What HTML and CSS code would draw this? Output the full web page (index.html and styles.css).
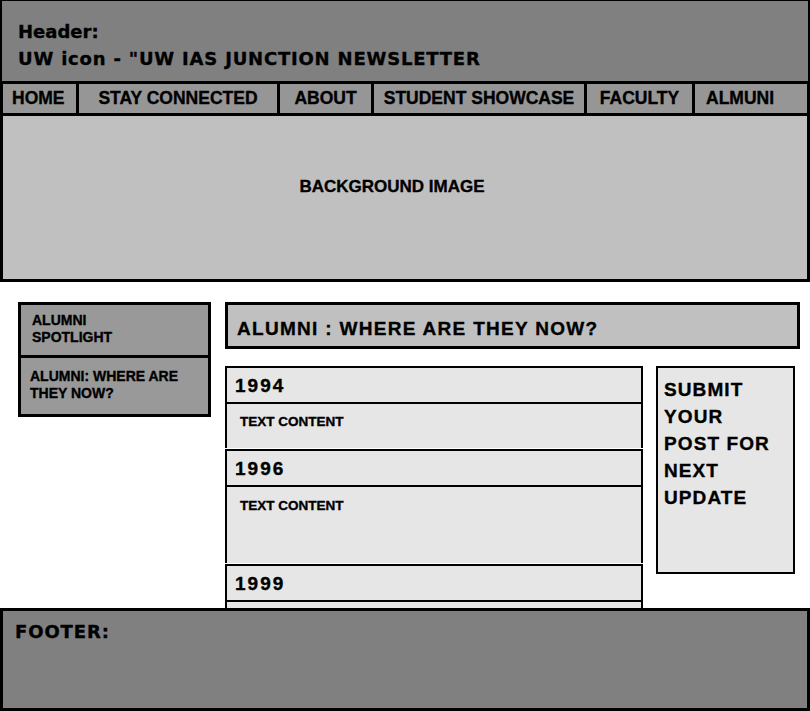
FILE: index.html
```html
<!DOCTYPE html>
<html lang="en">
<head>
<meta charset="utf-8">
<title>UW IAS Junction Newsletter</title>
<link rel="stylesheet" href="styles.css">
</head>
<body>
<header class="site-header">
  <p class="h-line">Header:</p>
  <p class="h-line h-title">UW icon - "UW IAS JUNCTION NEWSLETTER</p>
</header>
<nav class="main-nav">
  <a class="nav-item nav-home" href="#">HOME</a>
  <a class="nav-item nav-stay" href="#">STAY CONNECTED</a>
  <a class="nav-item nav-about" href="#">ABOUT</a>
  <a class="nav-item nav-student" href="#">STUDENT SHOWCASE</a>
  <a class="nav-item nav-faculty" href="#">FACULTY</a>
  <a class="nav-item nav-alumni" href="#">ALMUNI</a>
</nav>
<section class="hero"><span class="hero-text">BACKGROUND IMAGE</span></section>
<div class="layout">
  <aside class="sidebar">
    <div class="side-item side-first">ALUMNI<br>SPOTLIGHT</div>
    <div class="side-item side-second">ALUMNI: WHERE ARE<br>THEY NOW?</div>
  </aside>
  <main class="main">
    <h1 class="page-title">ALUMNI : WHERE ARE THEY NOW?</h1>
    <div class="columns">
      <div class="timeline">
        <div class="entry">
          <div class="entry-head">1994</div>
          <div class="entry-body body-short">TEXT CONTENT</div>
        </div>
        <div class="entry">
          <div class="entry-head">1996</div>
          <div class="entry-body body-tall">TEXT CONTENT</div>
        </div>
        <div class="entry">
          <div class="entry-head">1999</div>
          <div class="entry-body body-short">TEXT CONTENT</div>
        </div>
      </div>
      <div class="submit-box">SUBMIT<br>YOUR<br>POST FOR<br>NEXT<br>UPDATE</div>
    </div>
  </main>
</div>
<footer class="site-footer">FOOTER:</footer>
</body>
</html>
```
FILE: styles.css
```css
* { box-sizing: border-box; }
html, body { margin: 0; padding: 0; }
body {
  width: 810px;
  background: #fff;
  color: #000;
  font-family: "Liberation Sans", Arial, sans-serif;
  font-weight: bold;
  -webkit-text-stroke: 0.35px #000;
}

.site-header {
  height: 81px;
  background: #808080;
  border-top: 1px solid #000;
  border-left: 2px solid #000;
  border-right: 2px solid #000;
  padding: 17px 0 0 16px;
  font-family: "DejaVu Sans", Verdana, sans-serif;
  font-size: 18px;
  line-height: 27px;
}
.h-line { margin: 0; }
.h-title { letter-spacing: 0.8px; }

.main-nav {
  display: flex;
  gap: 3px;
  height: 35px;
  padding: 3px;
  background: #000;
}
.nav-item {
  display: block;
  height: 29px;
  line-height: 29px;
  background: #969696;
  color: #000;
  text-decoration: none;
  font-size: 17.5px;
  text-align: center;
  white-space: nowrap;
}
.nav-home { width: 73px; text-align: left; padding-left: 9px; }
.nav-stay { width: 198px; }
.nav-about { width: 91px; }
.nav-student { width: 210px; }
.nav-faculty { width: 105px; }
.nav-alumni { flex: 1; text-align: left; padding-left: 11px; }

.hero {
  height: 166px;
  background: #c0c0c0;
  border: 3px solid #000;
  border-top: 0;
  padding: 62px 26px 0 0;
  text-align: center;
  font-size: 17px;
  line-height: 18px;
}

.layout {
  display: flex;
  align-items: flex-start;
  gap: 14px;
  padding: 20px 0 0 18px;
}

.sidebar {
  width: 193px;
  background: #999;
  border: 3px solid #000;
  font-size: 14px;
  line-height: 17px;
}
.side-item { padding-top: 7px; }
.side-first { height: 53px; padding-left: 11px; border-bottom: 3px solid #000; }
.side-second { height: 56px; padding-top: 10px; padding-left: 9px; }

.main { width: 575px; }
.page-title {
  margin: 0 0 17px;
  height: 47px;
  background: #c0c0c0;
  border: 3px solid #000;
  padding: 13px 0 0 9px;
  font-size: 19px;
  line-height: 22px;
  letter-spacing: 1.3px;
}

.columns { display: flex; align-items: flex-start; gap: 13px; }
.timeline { width: 418px; }
.entry { margin-bottom: 1px; }
.entry-head {
  height: 38px;
  display: flex;
  align-items: center;
  padding: 2px 0 0 8px;
  background: #e6e6e6;
  border: 2px solid #000;
  font-size: 19px;
  letter-spacing: 2px;
}
.entry-body {
  background: #e6e6e6;
  border-left: 2px solid #000;
  border-right: 2px solid #000;
  padding: 10px 0 0 13px;
  font-size: 13.5px;
  line-height: 15px;
}
.body-short { height: 44px; }
.body-tall { height: 76px; padding-top: 11px; }

.submit-box {
  width: 139px;
  height: 208px;
  background: #e6e6e6;
  border: 2px solid #000;
  padding: 8px 0 0 6px;
  font-size: 19px;
  line-height: 27px;
  letter-spacing: 1.1px;
}

.site-footer {
  position: fixed;
  left: 0;
  right: 0;
  bottom: 0;
  height: 103px;
  background: #808080;
  border: 3px solid #000;
  padding: 7px 12px 0;
  font-family: "DejaVu Sans", Verdana, sans-serif;
  font-size: 18px;
  line-height: 27px;
  letter-spacing: 0.9px;
}
```
